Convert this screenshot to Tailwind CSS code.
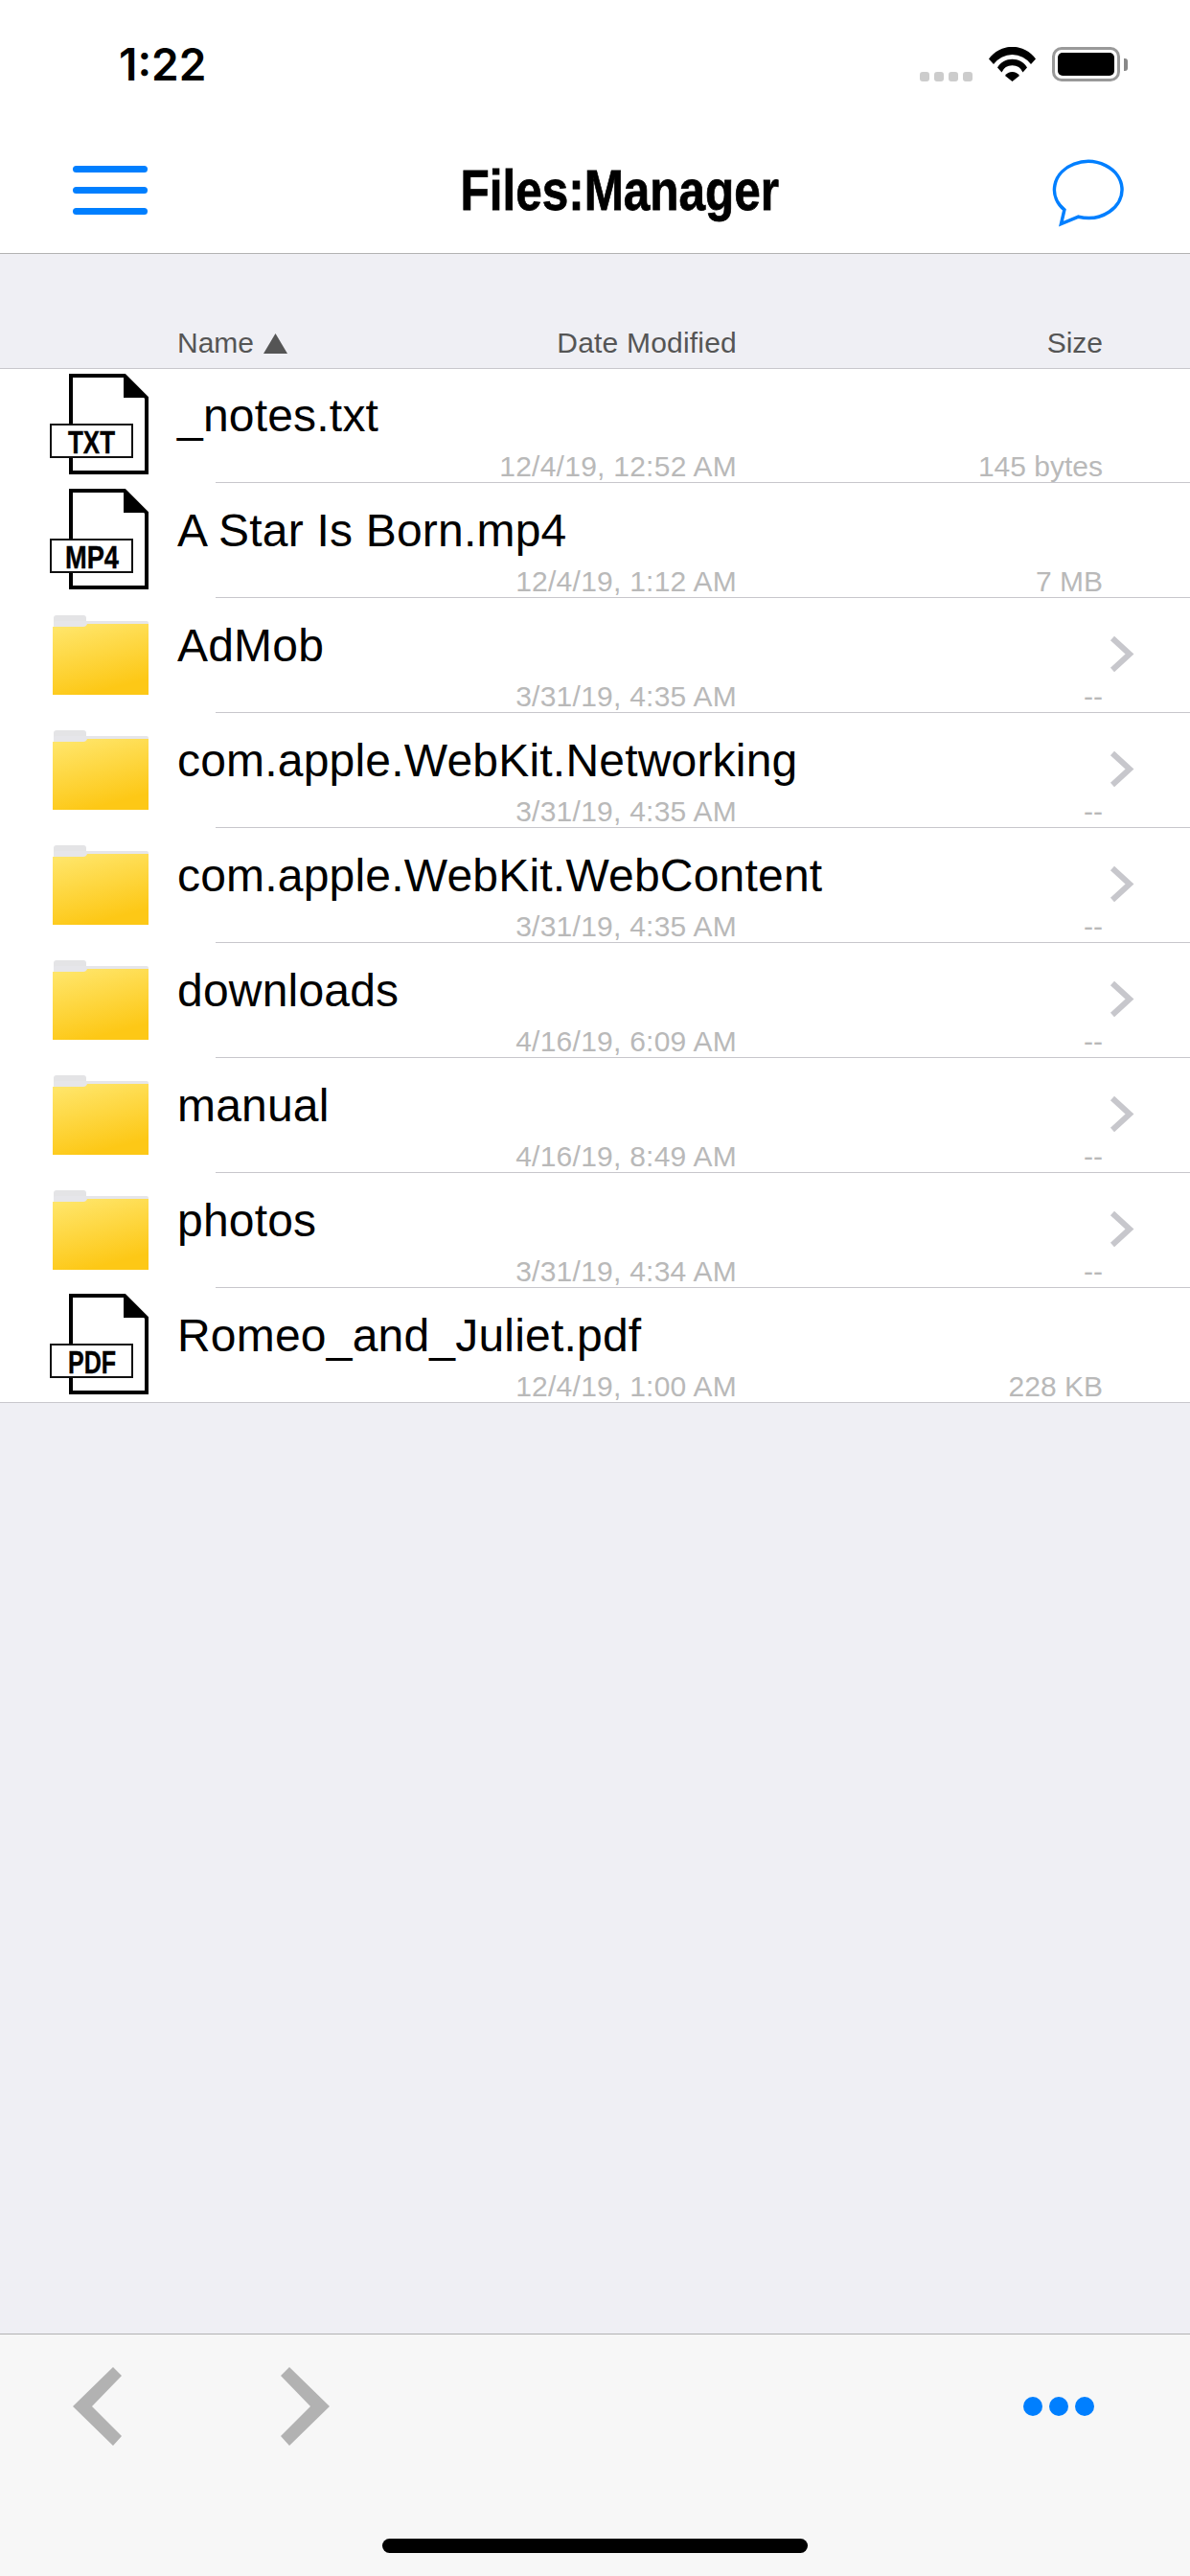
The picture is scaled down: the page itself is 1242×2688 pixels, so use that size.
<!DOCTYPE html>
<html lang="en">
<head>
  <meta charset="UTF-8">
  <title>Files:Manager</title>
  <script src="https://cdn.jsdelivr.net/npm/@tailwindcss/browser@4"></script>
</head>
<body class="w-[1242px] h-[2688px] flex flex-col overflow-hidden bg-[#efeff4] text-black font-['Liberation_Sans',sans-serif]">

  <!-- shared icons -->
  <svg class="absolute w-0 h-0">
    <defs>
      <linearGradient id="folderFill" x1="0" y1="0" x2="0.35" y2="1">
        <stop offset="0" stop-color="#ffe76f"/>
        <stop offset="1" stop-color="#fdc816"/>
      </linearGradient>
      <symbol id="fileIcon" viewBox="0 0 106 119">
        <path d="M24 7H80L103 30V108H24Z" fill="#fff" stroke="#000" stroke-width="4"/>
        <path d="M79 5L105 30H79Z" fill="#000"/>
        <rect x="3" y="58" width="85" height="34" fill="#fff" stroke="#111" stroke-width="2"/>
      </symbol>
      <symbol id="folderIcon" viewBox="0 0 106 119">
        <rect x="6" y="17" width="34" height="16" rx="3" fill="#e4e4e6"/>
        <rect x="6" y="23" width="99" height="10" rx="2" fill="#e6e6ea"/>
        <path d="M5 29H37q3 0 4-3H105V100H5Z" fill="url(#folderFill)"/>
      </symbol>
      <symbol id="rowChevron" viewBox="0 0 26 39">
        <path d="M3 3L21 19.5L3 36" fill="none" stroke="#c7c7cc" stroke-width="6"/>
      </symbol>
    </defs>
  </svg>

  <!-- Status bar -->
  <div class="h-[132px] bg-white flex items-start pl-[124px] pr-[65px] pt-[49px]">
    <span class="text-[46px] leading-[36px] font-semibold font-['Inter',sans-serif]">1:22</span>
    <div class="ml-auto flex items-start">
      <div class="flex gap-[5px] mt-[26px]">
        <div class="w-[10px] h-[10px] rounded-[3px] bg-[#cccccc]"></div>
        <div class="w-[10px] h-[10px] rounded-[3px] bg-[#cccccc]"></div>
        <div class="w-[10px] h-[10px] rounded-[3px] bg-[#cccccc]"></div>
        <div class="w-[10px] h-[10px] rounded-[3px] bg-[#cccccc]"></div>
      </div>
      <svg class="ml-[17px] w-[49px] h-[36px]" viewBox="0 0 49 36">
        <path d="M0 12.5A30 30 0 0 1 49 12.5L44 18A24 24 0 0 0 5 18Z"/>
        <path d="M9 21.5A18 18 0 0 1 40 21.5L35.5 26.5A12 12 0 0 0 13.5 26.5Z"/>
        <path d="M17 30A9 9 0 0 1 32 30L24.5 36Z"/>
      </svg>
      <div class="ml-[17px] w-[71px] h-[36px] rounded-[10px] border-[3px] border-[#999999] p-[3px]">
        <div class="w-full h-full rounded-[5px] bg-black"></div>
      </div>
      <div class="ml-[4px] mt-[12px] w-[4px] h-[13px] rounded-r-[3px] bg-[#888888]"></div>
    </div>
  </div>

  <!-- Nav bar -->
  <div class="h-[133px] bg-white border-b border-[#b2b2b2] flex items-center pl-[76px] pr-[63px]">
    <div class="flex flex-col gap-[15px] w-[78px]">
      <div class="h-[7px] rounded-full bg-[#007fff]"></div>
      <div class="h-[7px] rounded-full bg-[#007fff]"></div>
      <div class="h-[7px] rounded-full bg-[#007fff]"></div>
    </div>
    <h1 class="ml-[291px] mt-[2px] text-[60px] leading-[70px] font-bold scale-x-[0.824] [-webkit-text-stroke:0.8px_black]">Files:Manager</h1>
    <svg class="ml-auto mt-[8px] w-[84px] h-[76px]" viewBox="0 0 84 76">
      <path d="M15.9 54.9L12.5 69.5L30.6 62.2A35.3 29.5 0 1 0 15.9 54.9Z" fill="none" stroke="#007fff" stroke-width="3.5"/>
    </svg>
  </div>

  <!-- Column headers -->
  <div class="relative z-10 h-[120px] border-b border-[#c8c7cc] flex items-end pl-[185px] pr-[91px] pb-[8px] text-[30px] leading-[36px] text-[#555555]">
    <div class="w-[584px] flex justify-between">
      <div class="flex items-center gap-[10px]">
        <span>Name</span>
        <svg class="w-[25px] h-[21px]" viewBox="0 0 25 21"><path d="M12.5 0L25 21H0Z" fill="#555555"/></svg>
      </div>
      <span class="tracking-[0.2px]">Date Modified</span>
    </div>
    <span class="ml-auto">Size</span>
  </div>

  <!-- File list -->
  <div class="-mt-px bg-white border-b border-[#c8c7cc]">

    <div class="h-[119px] flex pl-[50px]">
      <svg class="mt-px w-[106px] h-[119px] mr-[29px]" viewBox="0 0 106 119">
        <use href="#fileIcon"/>
        <text x="21" y="88" font-size="33" font-weight="700" stroke="#000" stroke-width="0.4" textLength="49" lengthAdjust="spacingAndGlyphs">TXT</text>
      </svg>
      <div class="w-[966px] pt-[22px]">
        <div class="text-[48px] leading-[56px] tracking-[0.2px]">_notes.txt</div>
        <div class="mt-[7px] flex text-[30px] leading-[36px] text-[#b9b9b9]">
          <span class="w-[584px] text-right tracking-[0.25px]">12/4/19, 12:52 AM</span>
          <span class="flex-1 text-right">145 bytes</span>
        </div>
      </div>
    </div>
    <div class="ml-[225px] h-px bg-[#c8c7cc]"></div>

    <div class="h-[119px] flex pl-[50px]">
      <svg class="mt-px w-[106px] h-[119px] mr-[29px]" viewBox="0 0 106 119">
        <use href="#fileIcon"/>
        <text x="18" y="88" font-size="33" font-weight="700" stroke="#000" stroke-width="0.4" textLength="56" lengthAdjust="spacingAndGlyphs">MP4</text>
      </svg>
      <div class="w-[966px] pt-[22px]">
        <div class="text-[48px] leading-[56px] tracking-[0.2px]">A Star Is Born.mp4</div>
        <div class="mt-[7px] flex text-[30px] leading-[36px] text-[#b9b9b9]">
          <span class="w-[584px] text-right tracking-[0.25px]">12/4/19, 1:12 AM</span>
          <span class="flex-1 text-right">7 MB</span>
        </div>
      </div>
    </div>
    <div class="ml-[225px] h-px bg-[#c8c7cc]"></div>

    <div class="h-[119px] flex pl-[50px]">
      <svg class="mt-px w-[106px] h-[119px] mr-[29px]"><use href="#folderIcon"/></svg>
      <div class="w-[966px] pt-[22px]">
        <div class="text-[48px] leading-[56px] tracking-[0.2px]">AdMob</div>
        <div class="mt-[7px] flex text-[30px] leading-[36px] text-[#b9b9b9]">
          <span class="w-[584px] text-right tracking-[0.25px]">3/31/19, 4:35 AM</span>
          <span class="flex-1 text-right">--</span>
        </div>
      </div>
      <svg class="ml-[7px] mt-[39px] w-[26px] h-[39px]"><use href="#rowChevron"/></svg>
    </div>
    <div class="ml-[225px] h-px bg-[#c8c7cc]"></div>

    <div class="h-[119px] flex pl-[50px]">
      <svg class="mt-px w-[106px] h-[119px] mr-[29px]"><use href="#folderIcon"/></svg>
      <div class="w-[966px] pt-[22px]">
        <div class="text-[48px] leading-[56px] tracking-[0.2px]">com.apple.WebKit.Networking</div>
        <div class="mt-[7px] flex text-[30px] leading-[36px] text-[#b9b9b9]">
          <span class="w-[584px] text-right tracking-[0.25px]">3/31/19, 4:35 AM</span>
          <span class="flex-1 text-right">--</span>
        </div>
      </div>
      <svg class="ml-[7px] mt-[39px] w-[26px] h-[39px]"><use href="#rowChevron"/></svg>
    </div>
    <div class="ml-[225px] h-px bg-[#c8c7cc]"></div>

    <div class="h-[119px] flex pl-[50px]">
      <svg class="mt-px w-[106px] h-[119px] mr-[29px]"><use href="#folderIcon"/></svg>
      <div class="w-[966px] pt-[22px]">
        <div class="text-[48px] leading-[56px] tracking-[0.2px]">com.apple.WebKit.WebContent</div>
        <div class="mt-[7px] flex text-[30px] leading-[36px] text-[#b9b9b9]">
          <span class="w-[584px] text-right tracking-[0.25px]">3/31/19, 4:35 AM</span>
          <span class="flex-1 text-right">--</span>
        </div>
      </div>
      <svg class="ml-[7px] mt-[39px] w-[26px] h-[39px]"><use href="#rowChevron"/></svg>
    </div>
    <div class="ml-[225px] h-px bg-[#c8c7cc]"></div>

    <div class="h-[119px] flex pl-[50px]">
      <svg class="mt-px w-[106px] h-[119px] mr-[29px]"><use href="#folderIcon"/></svg>
      <div class="w-[966px] pt-[22px]">
        <div class="text-[48px] leading-[56px] tracking-[0.2px]">downloads</div>
        <div class="mt-[7px] flex text-[30px] leading-[36px] text-[#b9b9b9]">
          <span class="w-[584px] text-right tracking-[0.25px]">4/16/19, 6:09 AM</span>
          <span class="flex-1 text-right">--</span>
        </div>
      </div>
      <svg class="ml-[7px] mt-[39px] w-[26px] h-[39px]"><use href="#rowChevron"/></svg>
    </div>
    <div class="ml-[225px] h-px bg-[#c8c7cc]"></div>

    <div class="h-[119px] flex pl-[50px]">
      <svg class="mt-px w-[106px] h-[119px] mr-[29px]"><use href="#folderIcon"/></svg>
      <div class="w-[966px] pt-[22px]">
        <div class="text-[48px] leading-[56px] tracking-[0.2px]">manual</div>
        <div class="mt-[7px] flex text-[30px] leading-[36px] text-[#b9b9b9]">
          <span class="w-[584px] text-right tracking-[0.25px]">4/16/19, 8:49 AM</span>
          <span class="flex-1 text-right">--</span>
        </div>
      </div>
      <svg class="ml-[7px] mt-[39px] w-[26px] h-[39px]"><use href="#rowChevron"/></svg>
    </div>
    <div class="ml-[225px] h-px bg-[#c8c7cc]"></div>

    <div class="h-[119px] flex pl-[50px]">
      <svg class="mt-px w-[106px] h-[119px] mr-[29px]"><use href="#folderIcon"/></svg>
      <div class="w-[966px] pt-[22px]">
        <div class="text-[48px] leading-[56px] tracking-[0.2px]">photos</div>
        <div class="mt-[7px] flex text-[30px] leading-[36px] text-[#b9b9b9]">
          <span class="w-[584px] text-right tracking-[0.25px]">3/31/19, 4:34 AM</span>
          <span class="flex-1 text-right">--</span>
        </div>
      </div>
      <svg class="ml-[7px] mt-[39px] w-[26px] h-[39px]"><use href="#rowChevron"/></svg>
    </div>
    <div class="ml-[225px] h-px bg-[#c8c7cc]"></div>

    <div class="h-[119px] flex pl-[50px]">
      <svg class="mt-px w-[106px] h-[119px] mr-[29px]" viewBox="0 0 106 119">
        <use href="#fileIcon"/>
        <text x="21" y="88" font-size="33" font-weight="700" stroke="#000" stroke-width="0.4" textLength="50" lengthAdjust="spacingAndGlyphs">PDF</text>
      </svg>
      <div class="w-[966px] pt-[22px]">
        <div class="text-[48px] leading-[56px] tracking-[0.2px]">Romeo_and_Juliet.pdf</div>
        <div class="mt-[7px] flex text-[30px] leading-[36px] text-[#b9b9b9]">
          <span class="w-[584px] text-right tracking-[0.25px]">12/4/19, 1:00 AM</span>
          <span class="flex-1 text-right">228 KB</span>
        </div>
      </div>
    </div>
  </div>

  <div class="flex-1"></div>

  <!-- Bottom toolbar -->
  <div class="h-[253px] bg-[#f7f7f7] border-t border-[#b2b2b2] flex flex-col">
    <div class="flex items-start pl-[76px] pr-[100px] pt-[34px]">
      <svg class="w-[51px] h-[82px]" viewBox="0 0 51 82">
        <path d="M0 41L42 0L51 9L20 41L51 72L42 82Z" fill="#b2b2b2"/>
      </svg>
      <svg class="ml-[166px] w-[51px] h-[82px]" viewBox="0 0 51 82">
        <path d="M51 41L9 0L0 9L31 41L0 72L9 82Z" fill="#b2b2b2"/>
      </svg>
      <div class="ml-auto mt-[31px] flex gap-[7px]">
        <div class="w-[20px] h-[20px] rounded-full bg-[#007fff]"></div>
        <div class="w-[20px] h-[20px] rounded-full bg-[#007fff]"></div>
        <div class="w-[20px] h-[20px] rounded-full bg-[#007fff]"></div>
      </div>
    </div>
    <div class="mt-[97px] mx-auto w-[444px] h-[15px] rounded-full bg-black"></div>
  </div>

</body>
</html>
